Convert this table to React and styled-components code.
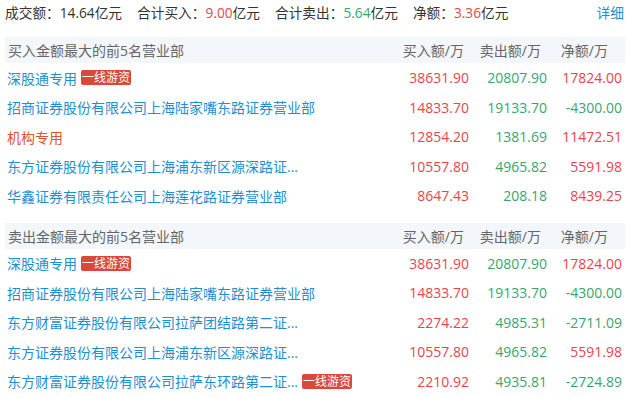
import styled, { createGlobalStyle } from "styled-components";

const GlobalStyle = createGlobalStyle`
  html, body {
    margin: 0;
    padding: 0;
    background: #fff;
  }
  body {
    font-family: "Open Sans", "Noto Sans CJK SC", sans-serif;
  }
`;

const RED = "#e8464a";
const GREEN = "#3aa56f";
const BLUE = "#1f8fd2";

const Page = styled.div`
  width: 629px;
  padding: 0 4px 0 5px;
  box-sizing: border-box;
`;

const Summary = styled.div`
  height: 24px;
  display: flex;
  align-items: center;
  font-size: 13.7px;
  color: #333;
  margin-bottom: 13px;
`;

const Stat = styled.span`
  margin-right: 15px;
  white-space: nowrap;
`;

const Value = styled.span`
  color: ${(p) => (p.$tone === "red" ? RED : p.$tone === "green" ? GREEN : "#333")};
`;

const Detail = styled.a`
  margin-left: auto;
  margin-right: 1px;
  color: ${BLUE};
  font-size: 13.7px;
  text-decoration: none;
`;

const Section = styled.section`
  margin-bottom: 12px;
`;

const HeadBar = styled.div`
  height: 26px;
  display: flex;
  align-items: center;
  background: #f3f6fa;
  color: #666;
  font-size: 14px;
`;

const HeadTitle = styled.div`
  flex: 1;
  padding-left: 3px;
`;

const HeadCol = styled.div`
  width: 78px;
  text-align: right;
  box-sizing: border-box;
  padding-right: ${(p) => p.$pr}px;
`;

const Row = styled.div`
  height: 29.5px;
  display: flex;
  align-items: center;
  font-size: 14px;
`;

const Name = styled.div`
  flex: 1;
  padding-left: 2px;
  display: flex;
  align-items: center;
  color: ${(p) => (p.$orange ? "#e0532f" : BLUE)};
  white-space: nowrap;
`;

const Badge = styled.span`
  display: inline-block;
  margin-left: 4px;
  padding: 0 1px;
  height: 15px;
  line-height: 15px;
  font-size: 12px;
  color: #fff;
  background: #d9483a;
  border-radius: 2px;
`;

const Num = styled.div`
  width: 78px;
  text-align: right;
  box-sizing: border-box;
  padding-right: ${(p) => p.$pr || 0}px;
  color: ${(p) => (p.$green ? GREEN : RED)};
`;

const buyRows = [
  { name: "深股通专用", badge: true, buy: "38631.90", sell: "20807.90", net: "17824.00" },
  { name: "招商证券股份有限公司上海陆家嘴东路证券营业部", buy: "14833.70", sell: "19133.70", net: "-4300.00" },
  { name: "机构专用", orange: true, buy: "12854.20", sell: "1381.69", net: "11472.51" },
  { name: "东方证券股份有限公司上海浦东新区源深路证...", buy: "10557.80", sell: "4965.82", net: "5591.98" },
  { name: "华鑫证券有限责任公司上海莲花路证券营业部", buy: "8647.43", sell: "208.18", net: "8439.25" },
];

const sellRows = [
  { name: "深股通专用", badge: true, buy: "38631.90", sell: "20807.90", net: "17824.00" },
  { name: "招商证券股份有限公司上海陆家嘴东路证券营业部", buy: "14833.70", sell: "19133.70", net: "-4300.00" },
  { name: "东方财富证券股份有限公司拉萨团结路第二证...", buy: "2274.22", sell: "4985.31", net: "-2711.09" },
  { name: "东方证券股份有限公司上海浦东新区源深路证...", buy: "10557.80", sell: "4965.82", net: "5591.98" },
  { name: "东方财富证券股份有限公司拉萨东环路第二证...", badge: true, buy: "2210.92", sell: "4935.81", net: "-2724.89" },
];

const Table = ({ title, rows }) => (
  <Section>
    <HeadBar>
      <HeadTitle>{title}</HeadTitle>
      <HeadCol $pr={5}>买入额/万</HeadCol>
      <HeadCol $pr={6}>卖出额/万</HeadCol>
      <HeadCol $pr={17}>净额/万</HeadCol>
    </HeadBar>
    {rows.map((r, i) => (
      <Row key={i}>
        <Name $orange={r.orange}>
          {r.name}
          {r.badge && <Badge>一线游资</Badge>}
        </Name>
        <Num>{r.buy}</Num>
        <Num $green>{r.sell}</Num>
        <Num $pr={3} $green={r.net.startsWith("-")}>{r.net}</Num>
      </Row>
    ))}
  </Section>
);

export default function App() {
  return (
    <Page>
      <GlobalStyle />
      <Summary>
        <Stat>成交额：14.64亿元</Stat>
        <Stat>
          合计买入：<Value $tone="red">9.00</Value>亿元
        </Stat>
        <Stat>
          合计卖出：<Value $tone="green">5.64</Value>亿元
        </Stat>
        <Stat>
          净额：<Value $tone="red">3.36</Value>亿元
        </Stat>
        <Detail href="#">详细</Detail>
      </Summary>
      <Table title="买入金额最大的前5名营业部" rows={buyRows} />
      <Table title="卖出金额最大的前5名营业部" rows={sellRows} />
    </Page>
  );
}
